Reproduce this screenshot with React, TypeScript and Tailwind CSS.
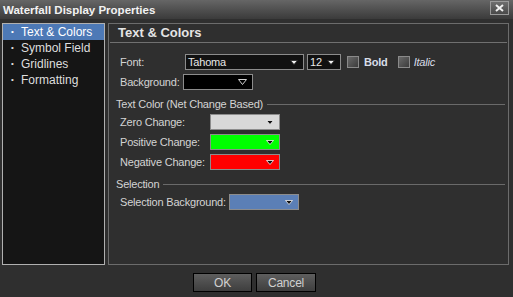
import React from "react";

const navItems = ["Text & Colors", "Symbol Field", "Gridlines", "Formatting"];

function Arrow({ hollow = false, dark = false }: { hollow?: boolean; dark?: boolean }) {
  if (hollow) {
    return (
      <svg width="9" height="6" viewBox="0 0 9 6" className="shrink-0">
        <path d="M0.5 0.5 H8.5 L4.5 5.5 Z" fill="none" stroke="#d0d0d0" strokeWidth="1" />
      </svg>
    );
  }
  return (
    <svg width="8" height="5" viewBox="0 0 8 5" className="shrink-0">
      <path
        d="M0.5 0.5 H7.5 L4 4.5 Z"
        fill={dark ? "#111" : "#f0f0f0"}
        stroke={dark ? "#f4f4f4" : "#222"}
        strokeWidth="0.8"
      />
    </svg>
  );
}

function ColorSelect({ color, hollow }: { color: string; hollow?: boolean }) {
  return (
    <div
      className="w-[70px] h-[16px] shrink-0 border border-[#8c8c8c] flex items-center justify-end pr-[5px]"
      style={{ backgroundColor: color }}
    >
      <Arrow hollow={hollow} dark={!hollow} />
    </div>
  );
}

function Checkbox() {
  return (
    <div className="w-[12px] h-[12px] border border-[#8a8a8a] bg-gradient-to-br from-[#6a6a6a] to-[#3c3c3c]" />
  );
}

function GroupLabel({ text }: { text: string }) {
  return (
    <div className="flex items-center h-[14px] pl-[7px] pr-[3px]">
      <span className="whitespace-nowrap">{text}</span>
      <div className="flex-1 h-px bg-[#6a6a6a] ml-[4px]" />
    </div>
  );
}

export default function App() {
  return (
    <div
      className="w-[513px] h-[297px] bg-[#2f2f2f] text-[#d4d4d4] text-[11px] leading-[14px] tracking-[-0.2px] flex flex-col"
      style={{ fontFamily: '"Liberation Sans", Arial, sans-serif' }}
    >
      <div className="h-[19px] bg-gradient-to-b from-[#666666] to-[#3b3b3b] flex items-center justify-between pl-[3px] pr-[4px]">
        <span className="font-bold text-[11.5px] text-[#f2f2f2] tracking-normal">Waterfall Display Properties</span>
        <div className="w-[19px] h-[14px] mb-[4px] border border-[#9a9a9a] bg-gradient-to-b from-[#6e6e6e] to-[#4a4a4a] flex items-center justify-center">
          <svg width="9" height="8" viewBox="0 0 9 8">
            <path d="M1 1 L8 7 M8 1 L1 7" stroke="#f0f0f0" strokeWidth="2" />
          </svg>
        </div>
      </div>

      <div className="flex gap-[3px] pl-[2px] pr-[4px] mt-[4px] h-[242px]">
        <div className="w-[103px] border border-[#b0b0b0] bg-[#151515]">
          <ul>
            {navItems.map((item, i) => (
              <li
                key={item}
                className={`h-[16px] flex items-center pl-[8px] text-[12px] tracking-normal ${i === 0 ? "bg-[#4d79b6] text-white" : "text-[#dedede]"}`}
              >
                <span className="w-[10px] text-[8px]">•</span>
                <span>{item}</span>
              </li>
            ))}
          </ul>
        </div>

        <div className="flex-1 border border-[#6c6c6c]">
          <div className="mx-[1px] h-[19px] border-b border-[#707070] flex items-center pl-[8px]">
            <span className="font-bold text-[13px] text-[#e4e4e4] tracking-normal">Text & Colors</span>
          </div>

          <div className="mt-[11px] pl-[11px] flex items-center h-[16px]">
            <span className="w-[65px]">Font:</span>
            <div className="w-[119px] h-[16px] border border-[#8c8c8c] bg-[#111] flex items-center justify-between pl-[2px] pr-[5px]">
              <span className="text-[#e8e8e8]">Tahoma</span>
              <Arrow />
            </div>
            <div className="ml-[3px] w-[34px] h-[16px] border border-[#8c8c8c] bg-[#111] flex items-center justify-between pl-[2px] pr-[5px]">
              <span className="text-[#e8e8e8]">12</span>
              <Arrow />
            </div>
            <div className="ml-[6px] flex items-center gap-[5px]">
              <Checkbox />
              <span className="font-bold text-[#d8dde8]">Bold</span>
            </div>
            <div className="ml-[10px] flex items-center gap-[4px]">
              <Checkbox />
              <span className="italic text-[#d8dde8]">Italic</span>
            </div>
          </div>

          <div className="mt-[4px] pl-[11px] flex items-center h-[16px]">
            <span className="w-[63px] whitespace-nowrap">Background:</span>
            <ColorSelect color="#000000" hollow />
          </div>

          <div className="mt-[7px]">
            <GroupLabel text="Text Color (Net Change Based)" />
          </div>

          <div className="mt-[3px] pl-[11px] flex flex-col gap-[4px]">
            <div className="flex items-center h-[16px]">
              <span className="w-[90px] whitespace-nowrap">Zero Change:</span>
              <ColorSelect color="#d8d8d8" />
            </div>
            <div className="flex items-center h-[16px]">
              <span className="w-[90px] whitespace-nowrap">Positive Change:</span>
              <ColorSelect color="#00ff00" />
            </div>
            <div className="flex items-center h-[16px]">
              <span className="w-[90px] whitespace-nowrap">Negative Change:</span>
              <ColorSelect color="#ff0000" />
            </div>
          </div>

          <div className="mt-[7px]">
            <GroupLabel text="Selection" />
          </div>

          <div className="mt-[3px] pl-[11px] flex items-center h-[16px]">
            <span className="w-[109px] whitespace-nowrap shrink-0">Selection Background:</span>
            <ColorSelect color="#5b7fb6" />
          </div>
        </div>
      </div>

      <div className="mt-[8px] flex justify-center gap-[4px] pr-[4px]">
        <button className="w-[59px] h-[19px] border border-black bg-gradient-to-b from-[#5e5e5e] to-[#3e3e3e] text-[#d0d0d0] text-[12px]">
          OK
        </button>
        <button className="w-[60px] h-[19px] border border-black bg-gradient-to-b from-[#5e5e5e] to-[#3e3e3e] text-[#d0d0d0] text-[12px]">
          Cancel
        </button>
      </div>
    </div>
  );
}
